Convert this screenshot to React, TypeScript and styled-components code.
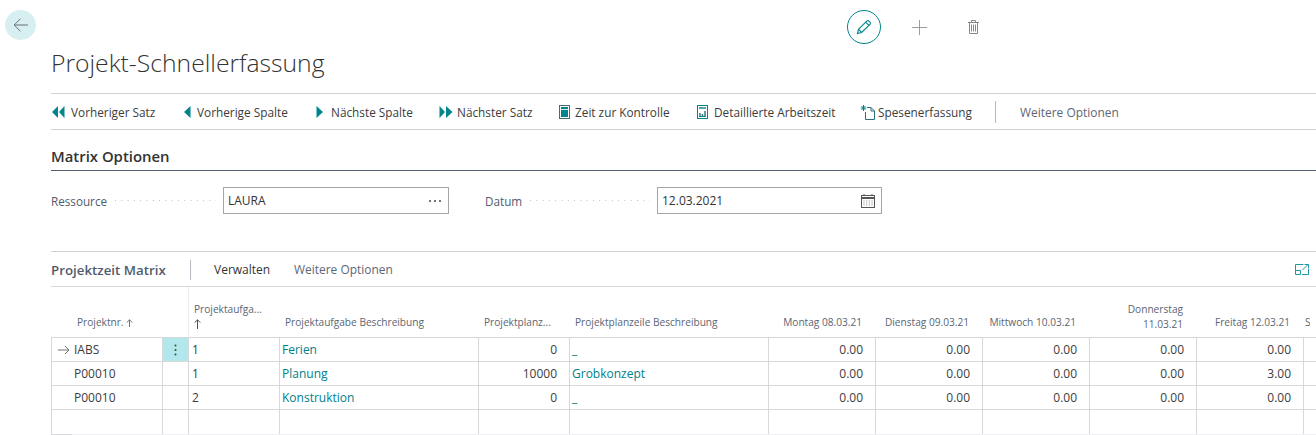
import React from "react";
import styled, { createGlobalStyle } from "styled-components";

const Global = createGlobalStyle`
  html, body { margin: 0; padding: 0; background: #fff; }
  body { font-family: "Open Sans", "Noto Sans", "Liberation Sans", sans-serif; color: #333; overflow: hidden; }
  #root { width: 1316px; height: 435px; overflow: hidden; }
`;

const Page = styled.div`
  width: 1316px;
  height: 435px;
  overflow: hidden;
`;
const TopRow = styled.div`
  display: flex;
  height: 46px;
  padding-left: 5px;
  box-sizing: border-box;
`;
const BackButton = styled.div`
  width: 31px;
  height: 30px;
  margin-top: 10px;
  border-radius: 50%;
  background: #d8eff2;
  display: flex;
  align-items: center;
  justify-content: center;
`;
const Actions = styled.div`
  display: flex;
  align-items: center;
  margin-left: 811px;
  margin-top: 10px;
  height: 34px;
`;
const EditCircle = styled.div`
  width: 32px;
  height: 32px;
  border: 1px solid #00858c;
  border-radius: 50%;
  display: flex;
  align-items: center;
  justify-content: center;
`;
const ActionIcon = styled.div<{ $gap: number }>`
  margin-left: ${(p) => p.$gap}px;
  display: flex;
`;
const Title = styled.h1`
  margin: 0 0 0 51px;
  height: 47px;
  font-family: "Open Sans", sans-serif;
  font-weight: 300;
  font-size: 24.7px;
  line-height: 34px;
  color: #333;
`;
const Body = styled.div`
  margin-left: 51px;
`;
const CommandBar = styled.div`
  display: flex;
  align-items: center;
  box-sizing: content-box;
  height: 34px;
  padding-top: 1px;
  border-top: 1px solid #d2d2d4;
  border-bottom: 1px solid #d2d2d4;
  font-size: 11.8px;
  color: #3c3c3c;
`;
const Command = styled.div<{ $width: number }>`
  display: flex;
  align-items: center;
  width: ${(p) => p.$width}px;
  flex: none;
  white-space: nowrap;
`;
const CommandIcon = styled.span<{ $width: number }>`
  width: ${(p) => p.$width}px;
  display: flex;
  align-items: center;
  flex: none;
`;
const Divider = styled.div`
  width: 1px;
  height: 22px;
  background: #b4b9c0;
  flex: none;
`;
const Muted = styled.span`
  color: #5d6676;
  font-size: 11.95px;
  white-space: nowrap;
`;
const SectionTitle = styled.h2`
  margin: 0;
  height: 40px;
  line-height: 53px;
  box-sizing: content-box;
  font-size: 14.9px;
  font-weight: 600;
  color: #333;
  border-bottom: 1px solid #4f5d6e;
`;
const Fields = styled.div`
  display: flex;
  align-items: center;
  margin-top: 16px;
  height: 27px;
`;
const Label = styled.div<{ $width: number }>`
  display: flex;
  align-items: center;
  width: ${(p) => p.$width}px;
  font-size: 11.7px;
  color: #505c6d;
  flex: none;
`;
const Dots = styled.span`
  flex: 1;
  height: 1px;
  margin: 0 7px 0 8px;
  background: linear-gradient(to right, #bcbcbc 1px, transparent 1px) 0 0 / 6.3px 1px repeat-x;
`;
const Input = styled.div<{ $width: number; $pad: number }>`
  box-sizing: border-box;
  display: flex;
  align-items: center;
  justify-content: space-between;
  width: ${(p) => p.$width}px;
  height: 27px;
  padding: 0 6px 0 ${(p) => p.$pad}px;
  border: 1px solid #a6a6a6;
  font-size: 12px;
  color: #333;
  flex: none;
`;
const Gap = styled.div<{ $width: number }>`
  width: ${(p) => p.$width}px;
  flex: none;
`;
const SubBar = styled.div`
  display: flex;
  align-items: center;
  margin-top: 37px;
  height: 33px;
  padding-top: 1px;
  border-top: 1px solid #d2d2d4;
  border-bottom: 1px solid #d8d8dc;
  font-size: 12px;
`;
const SubTitle = styled.div`
  width: 139px;
  flex: none;
  font-size: 13.3px;
  font-weight: 600;
  color: #505c6d;
`;
const SubDivider = styled.div`
  width: 1px;
  height: 20px;
  background: #b4b9c0;
  margin-right: 23px;
  flex: none;
`;
const Manage = styled.span`
  width: 80px;
  color: #333;
  flex: none;
`;
const ExpandIcon = styled.span`
  margin-left: auto;
  margin-right: 7px;
  display: flex;
`;
const Table = styled.table`
  border-collapse: separate;
  border-spacing: 0;
  table-layout: fixed;
  width: 1265px;
  font-size: 12px;
`;
const Th = styled.th<{ $right?: boolean; $line?: boolean; $pl?: number; $wrapped?: boolean }>`
  box-sizing: border-box;
  height: 51px;
  padding: 0 ${(p) => (p.$right ? 14 : 3)}px ${(p) => (p.$wrapped ? 5 : 7)}px ${(p) => p.$pl ?? 5}px;
  vertical-align: bottom;
  font-weight: 400;
  font-size: 10.15px;
  line-height: 15px;
  color: #5b6573;
  text-align: ${(p) => (p.$right ? "right" : "left")};
  border-bottom: 1px solid #d8d8dc;
  border-right: ${(p) => (p.$line ? "1px solid #ececee" : "0")};
  overflow: hidden;
`;
const ClippedHead = styled.span`
  display: inline-block;
  width: 5px;
  overflow: hidden;
  white-space: nowrap;
  vertical-align: bottom;
`;
const Td = styled.td<{ $right?: boolean; $first?: boolean; $tint?: boolean; $link?: boolean; $pl?: number }>`
  box-sizing: border-box;
  height: 24px;
  padding: 0 ${(p) => (p.$right ? 12 : 2)}px 0 ${(p) => p.$pl ?? 2}px;
  font-size: 12px;
  line-height: 22px;
  color: ${(p) => (p.$link ? "#00808a" : "#3c3c3c")};
  text-align: ${(p) => (p.$right ? "right" : "left")};
  background: ${(p) => (p.$tint ? "#b2e7ec" : "transparent")};
  border-bottom: 1px solid #d8d8dc;
  border-right: 1px solid #d8d8dc;
  border-left: ${(p) => (p.$first ? "1px solid #d8d8dc" : "0")};
  white-space: nowrap;
  overflow: hidden;
`;
const LastTd = styled(Td)`
  border-bottom: 0;
`;
const RowHead = styled.div`
  display: flex;
  align-items: center;
`;
const RowMark = styled.span`
  width: 16px;
  display: flex;
  flex: none;
`;
const Kebab = styled.div`
  display: flex;
  justify-content: center;
`;
const BottomEdge = styled.div`
  height: 1px;
  background: #efeff1;
  &::before {
    content: "";
    display: block;
    width: 21px;
    height: 1px;
    background: #d8d8dc;
  }
`;
const UpArrow = styled.svg`
  vertical-align: -1px;
`;

const teal = "#00858c";

const DoubleLeft = () => (
  <svg width="14" height="12" viewBox="0 0 14 12"><path d="M7 0v12L1 6zM13.5 0v12L8 6z" fill={teal} /></svg>
);
const SingleLeft = () => (
  <svg width="8" height="12" viewBox="0 0 8 12"><path d="M7.5 0v12L1 6z" fill={teal} /></svg>
);
const SingleRight = () => (
  <svg width="8" height="12" viewBox="0 0 8 12"><path d="M.5 0v12L7 6z" fill={teal} /></svg>
);
const DoubleRight = () => (
  <svg width="14" height="12" viewBox="0 0 14 12"><path d="M.5 0v12L6 6zM7 0v12l6.5-6z" fill={teal} /></svg>
);
const BookIcon = () => (
  <svg width="11" height="14" viewBox="0 0 11 14"><rect x=".5" y=".5" width="10" height="13" fill="#fff" stroke="#4d6b72" /><rect x="2" y="2" width="7" height="10" fill={teal} /><path d="M2 4.5h7" stroke="#cfe9ea" /></svg>
);
const ReportIcon = () => (
  <svg width="11" height="14" viewBox="0 0 11 14" fill="none"><rect x=".5" y=".5" width="10" height="13" stroke={teal} /><path d="M2 3h7" stroke={teal} strokeWidth="1.4" /><path d="M3 11V8M5.5 11V9M8 11V6" stroke="#2e6f78" strokeWidth="1.4" /><path d="M2 11.5h7" stroke={teal} /></svg>
);
const NewDocIcon = () => (
  <svg width="16" height="15" viewBox="0 0 16 15" fill="none"><path d="M7 2.5h4L14.5 6v8.5H5.5V7" stroke="#2f6f78" /><path d="M11 2.5V6h3.5" stroke="#2f6f78" /><path d="M3.5 0v6M.8 3h5.4M1.6 1.1l3.8 3.8M5.4 1.1L1.6 4.9" stroke={teal} /></svg>
);
const SortUp = ({ color, h }: { color: string; h: number }) => (
  <UpArrow width="7" height={h} viewBox={`0 0 7 ${h}`} fill="none" stroke={color} strokeWidth="1"><path d={`M3.5 ${h}V.8M.7 3.6L3.5.8l2.8 2.8`} /></UpArrow>
);

const columns = [112, 26, 91, 199, 91, 199, 107, 107, 107, 107, 107, 112];

const rows = [
  { nr: "IABS", task: "1", desc: "Ferien", line: "0", lineDesc: "_", fri: "0.00", active: true },
  { nr: "P00010", task: "1", desc: "Planung", line: "10000", lineDesc: "Grobkonzept", fri: "3.00", active: false },
  { nr: "P00010", task: "2", desc: "Konstruktion", line: "0", lineDesc: "_", fri: "0.00", active: false },
];

export default function App() {
  return (
    <Page>
      <Global />
      <TopRow>
        <BackButton>
          <svg width="16" height="14" viewBox="0 0 16 14" fill="none" stroke="#6a6f76" strokeWidth="1">
            <path d="M15 7H1.2M7.4 .8L1.2 7l6.2 6.2" />
          </svg>
        </BackButton>
        <Actions>
          <EditCircle>
            <svg width="16" height="16" viewBox="0 0 16 16" fill="none" stroke={teal} strokeWidth="1.1">
              <path d="M1.5 14.5l1-4.2 8.2-8.2c.7-.7 1.5-.7 2.1-.1l1.2 1.2c.6.6.6 1.4-.1 2.1l-8.2 8.2z" />
              <path d="M2.5 10.3l3.2 3.2M9.7 3.1l3.2 3.2" />
            </svg>
          </EditCircle>
          <ActionIcon $gap={31}>
            <svg width="15" height="15" viewBox="0 0 15 15" stroke="#9a9ea4" strokeWidth="1"><path d="M7.5 0v15M0 7.5h15" /></svg>
          </ActionIcon>
          <ActionIcon $gap={41}>
            <svg width="11" height="14" viewBox="0 0 11 14" fill="none" stroke="#85898f" strokeWidth="1">
              <path d="M0 2.5h11M3.5 2.5V.5h4v2M1.5 2.5v11h8v-11" />
              <path d="M3.5 4.5v7M5.5 4.5v7M7.5 4.5v7" />
            </svg>
          </ActionIcon>
        </Actions>
      </TopRow>
      <Title>Projekt-Schnellerfassung</Title>
      <Body>
        <CommandBar>
          <Command $width={132}><CommandIcon $width={20}><DoubleLeft /></CommandIcon>Vorheriger Satz</Command>
          <Command $width={133}><CommandIcon $width={14}><SingleLeft /></CommandIcon>Vorherige Spalte</Command>
          <Command $width={123}><CommandIcon $width={15}><SingleRight /></CommandIcon>Nächste Spalte</Command>
          <Command $width={120}><CommandIcon $width={18}><DoubleRight /></CommandIcon>Nächster Satz</Command>
          <Command $width={138}><CommandIcon $width={16}><BookIcon /></CommandIcon>Zeit zur Kontrolle</Command>
          <Command $width={163}><CommandIcon $width={17}><ReportIcon /></CommandIcon>Detaillierte Arbeitszeit</Command>
          <Command $width={135}><CommandIcon $width={18}><NewDocIcon /></CommandIcon>Spesenerfassung</Command>
          <Divider />
          <Gap $width={24} />
          <Muted>Weitere Optionen</Muted>
        </CommandBar>
        <SectionTitle>Matrix Optionen</SectionTitle>
        <Fields>
          <Label $width={172}>Ressource<Dots /></Label>
          <Input $width={226} $pad={4}>
            LAURA
            <svg width="14" height="4" viewBox="0 0 14 4" fill="#444"><circle cx="2" cy="2" r="1" /><circle cx="7" cy="2" r="1" /><circle cx="12" cy="2" r="1" /></svg>
          </Input>
          <Gap $width={36} />
          <Label $width={172}>Datum<Dots /></Label>
          <Input $width={225} $pad={4}>
            12.03.2021
            <svg width="14" height="14" viewBox="0 0 14 14" fill="none" stroke="#555" strokeWidth="1">
              <rect x=".5" y="1.5" width="13" height="12" />
              <path d="M.5 4h13" strokeWidth="2" />
              <path d="M3 0v2M11 0v2" />
              <path d="M3 6.5v5M5.7 6.5v5M8.3 6.5v5M11 6.5v5" stroke="#888" strokeDasharray="1 1" />
            </svg>
          </Input>
        </Fields>
        <SubBar>
          <SubTitle>Projektzeit Matrix</SubTitle>
          <SubDivider />
          <Manage>Verwalten</Manage>
          <Muted>Weitere Optionen</Muted>
          <ExpandIcon>
            <svg width="14" height="11" viewBox="0 0 14 11" fill="none" stroke="#1d97a1" strokeWidth="1">
              <path d="M.5 10.5V.5h8M13.5 5v5.5H7M.5 6.5h5v4h-5M7.5 6l5.5-5.5M9.5.5h4V4.5" />
            </svg>
          </ExpandIcon>
        </SubBar>
        <Table>
          <colgroup>
            {columns.map((w, i) => <col key={i} width={w} />)}
          </colgroup>
          <thead>
            <tr>
              <Th colSpan={2} $pl={26} $line>Projektnr. <SortUp color="#6b7280" h={8} /></Th>
              <Th $wrapped>Projektaufga...<br /><SortUp color="#4a4f57" h={10} /></Th>
              <Th>Projektaufgabe Beschreibung</Th>
              <Th>Projektplanz...</Th>
              <Th>Projektplanzeile Beschreibung</Th>
              <Th $right>Montag 08.03.21</Th>
              <Th $right>Dienstag 09.03.21</Th>
              <Th $right>Mittwoch 10.03.21</Th>
              <Th $right $pl={30} $wrapped>Donnerstag 11.03.21</Th>
              <Th $right>Freitag 12.03.21</Th>
              <Th $pl={1}><ClippedHead>Samstag 13.03.21</ClippedHead></Th>
            </tr>
          </thead>
          <tbody>
            {rows.map((r, i) => (
              <tr key={i}>
                <Td $first $pl={6}>
                  <RowHead>
                    <RowMark>
                      {r.active && (
                        <svg width="12" height="10" viewBox="0 0 12 10" fill="none" stroke="#6f7378" strokeWidth="1"><path d="M0 5h11M7 1l4 4-4 4" /></svg>
                      )}
                    </RowMark>
                    {r.nr}
                  </RowHead>
                </Td>
                <Td $tint={r.active}>
                  {r.active && (
                    <Kebab>
                      <svg width="3" height="12" viewBox="0 0 3 12" fill="#444"><circle cx="1.5" cy="1.5" r="1" /><circle cx="1.5" cy="6" r="1" /><circle cx="1.5" cy="10.5" r="1" /></svg>
                    </Kebab>
                  )}
                </Td>
                <Td $pl={3}>{r.task}</Td>
                <Td $link>{r.desc}</Td>
                <Td $right>{r.line}</Td>
                <Td $link>{r.lineDesc}</Td>
                <Td $right>0.00</Td>
                <Td $right>0.00</Td>
                <Td $right>0.00</Td>
                <Td $right>0.00</Td>
                <Td $right>{r.fri}</Td>
                <Td />
              </tr>
            ))}
            <tr>
              <LastTd $first />
              {columns.slice(1).map((_, i) => <LastTd key={i} />)}
            </tr>
          </tbody>
        </Table>
        <BottomEdge />
      </Body>
    </Page>
  );
}
